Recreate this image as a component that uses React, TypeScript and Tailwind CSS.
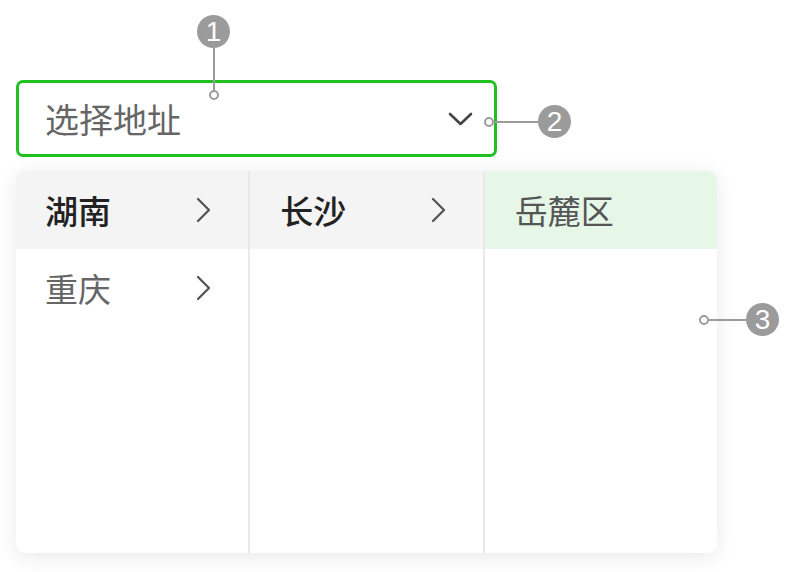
import React from "react";

const font = { fontFamily: '"Noto Sans CJK SC", "Noto Sans", sans-serif' };

function Chevron() {
  return (
    <svg width="17" height="26" viewBox="0 0 17 26" fill="none">
      <path d="M3 2 L14 13 L3 24" stroke="#555" strokeWidth="2.3" strokeLinecap="round" strokeLinejoin="round" />
    </svg>
  );
}

function Badge({ n }: { n: string }) {
  return (
    <div className="w-[33px] h-[33px] rounded-full bg-[#9b9b9b] flex items-center justify-center text-white text-[28px] leading-none" style={{ fontFamily: '"Liberation Sans", Arial, sans-serif' }}>
      {n}
    </div>
  );
}

function Dot() {
  return <div className="w-[10px] h-[10px] rounded-full border-2 border-[#9b9b9b] bg-white" />;
}

export default function App() {
  return (
    <div className="w-[794px] h-[572px] bg-white relative overflow-hidden" style={font}>
      <div className="pt-[80px] pl-[16px] flex flex-col gap-[14px]">
        <div className="w-[481px] h-[77px] border-[3px] border-[#1ec11f] rounded-[7px] flex items-center justify-between pl-[26px] pr-[21px]">
          <span className="text-[34px] text-[#666] leading-none">选择地址</span>
          <svg width="25" height="14" viewBox="0 0 25 14" fill="none">
            <path d="M2 2 L12.5 12 L23 2" stroke="#444" strokeWidth="2.6" strokeLinecap="round" strokeLinejoin="round" />
          </svg>
        </div>
        <div className="w-[701px] h-[382px] rounded-[9px] bg-white shadow-[0_4px_22px_rgba(0,0,0,0.09)] flex overflow-hidden">
          <div className="flex-1 border-r-2 border-[#e9e9e9] flex flex-col">
            <div className="h-[78px] bg-[#f4f4f4] flex items-center justify-between pl-[29px] pr-[36px]">
              <span className="text-[33px] font-medium text-[#222] leading-none">湖南</span>
              <Chevron />
            </div>
            <div className="h-[78px] flex items-center justify-between pl-[29px] pr-[36px]">
              <span className="text-[33px] text-[#666] leading-none">重庆</span>
              <Chevron />
            </div>
          </div>
          <div className="flex-1 border-r-2 border-[#e9e9e9] flex flex-col">
            <div className="h-[78px] bg-[#f4f4f4] flex items-center justify-between pl-[30px] pr-[36px]">
              <span className="text-[33px] font-medium text-[#222] leading-none">长沙</span>
              <Chevron />
            </div>
          </div>
          <div className="flex-1 flex flex-col">
            <div className="h-[78px] bg-[#e6f6e7] flex items-center pl-[30px]">
              <span className="text-[33px] text-[#555] leading-none">岳麓区</span>
            </div>
          </div>
        </div>
      </div>

      {/* annotation 1 */}
      <div className="absolute left-[197px] top-[15px] flex flex-col items-center">
        <Badge n="1" />
        <div className="w-[2px] h-[42px] bg-[#9b9b9b]" />
        <Dot />
      </div>
      {/* annotation 2 */}
      <div className="absolute left-[484px] top-[105px] flex items-center">
        <Dot />
        <div className="w-[44px] h-[2px] bg-[#9b9b9b]" />
        <Badge n="2" />
      </div>
      {/* annotation 3 */}
      <div className="absolute left-[699px] top-[303px] flex items-center">
        <Dot />
        <div className="w-[37px] h-[2px] bg-[#9b9b9b]" />
        <Badge n="3" />
      </div>
    </div>
  );
}
